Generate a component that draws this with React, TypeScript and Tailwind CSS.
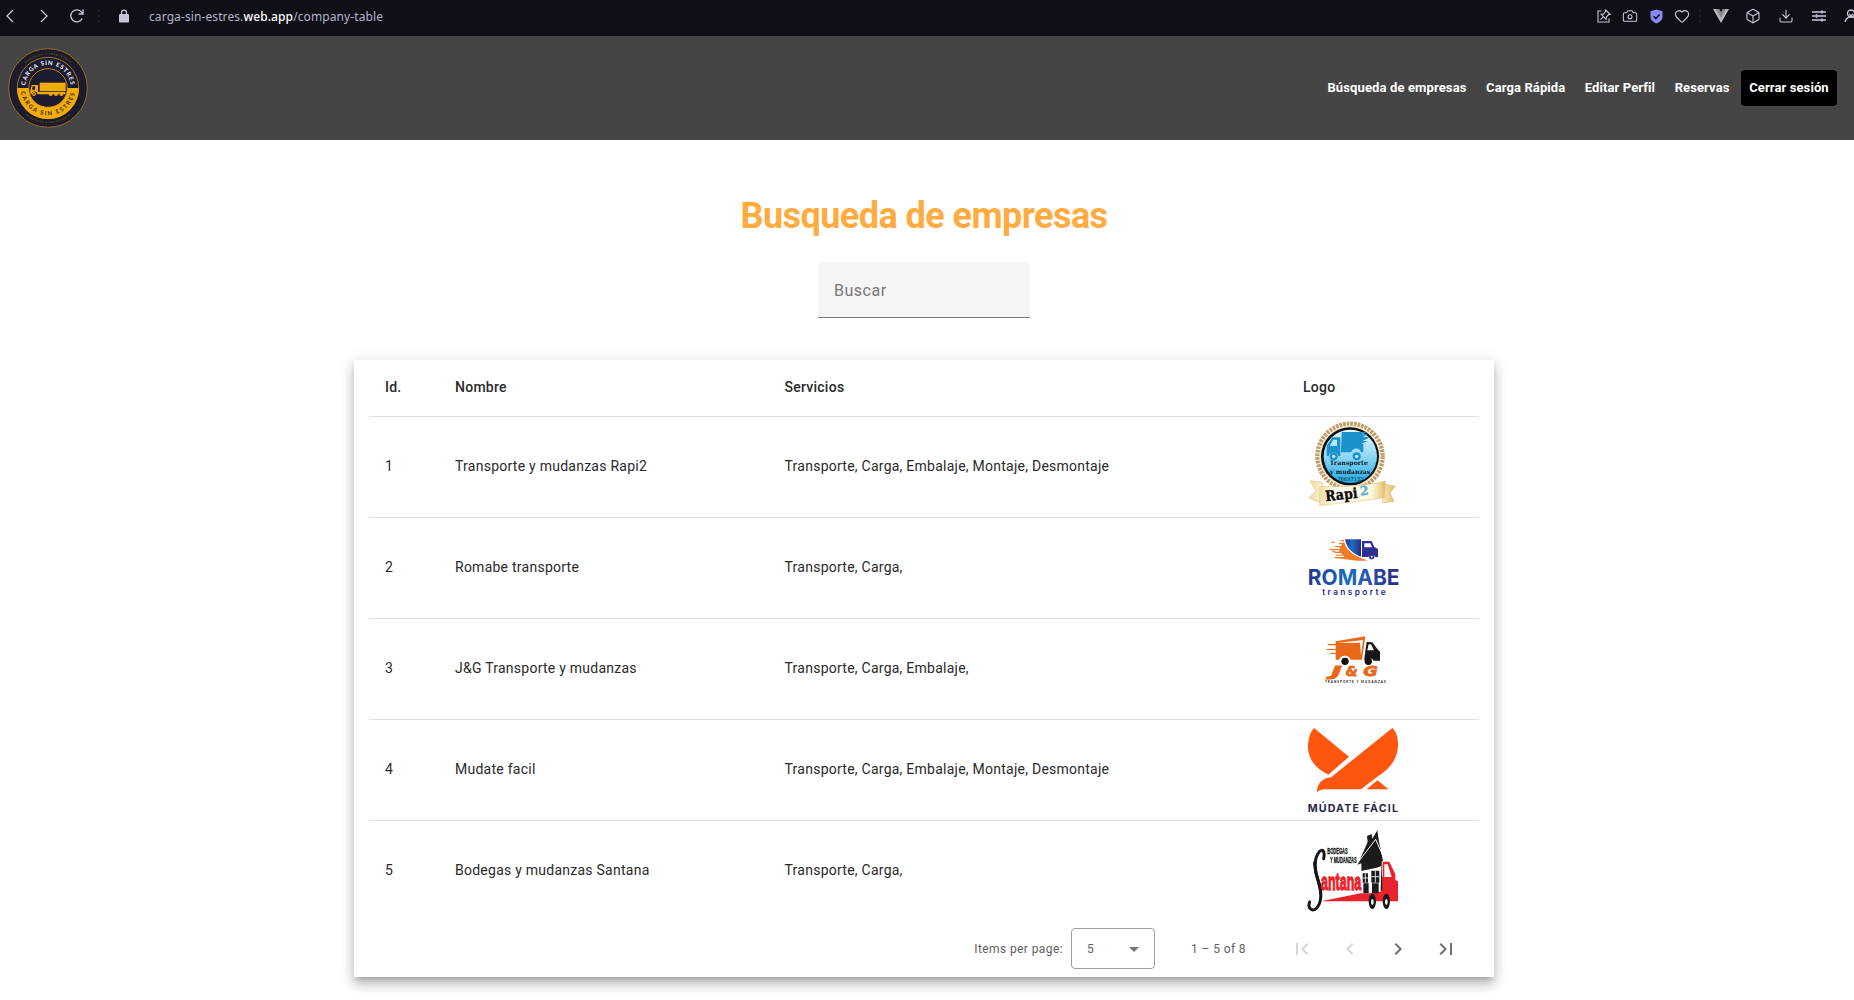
import React from "react";
import { Box, Camera, Download, Heart } from "lucide-react";

const line = { fill: "none", stroke: "#c9c8dc", strokeWidth: 1.3 } as const;

function Dots() {
  return (
    <svg width="4" height="14" viewBox="0 0 4 14" fill="#20202d">
      <rect x="1" y="1" width="2" height="2" />
      <rect x="1" y="6" width="2" height="2" />
      <rect x="1" y="11" width="2" height="2" />
    </svg>
  );
}

function BrowserBar() {
  const cell = "flex shrink-0 items-center justify-center";
  return (
    <div className="flex h-9 items-center overflow-hidden bg-[#0f0f18] pb-1 text-[#c9c8dc]">
      <svg className="ml-[5px]" width="10" height="14" viewBox="0 0 10 14" {...line}>
        <path d="M8 1 2 7l6 6" />
      </svg>
      <svg className="ml-6" width="10" height="14" viewBox="0 0 10 14" {...line}>
        <path d="m2 1 6 6-6 6" />
      </svg>
      <svg className="ml-5" width="16" height="16" viewBox="0 0 16 16" {...line}>
        <path d="M13.2 10.5A6 6 0 1 1 12.6 4.2L14 6M14 1.5V6H9.5" />
      </svg>
      <span className="ml-3 flex"><Dots /></span>
      <svg className="ml-[18px]" width="10" height="14" viewBox="0 0 10 14">
        <path d="M2.5 6V3.6a2.5 2.5 0 0 1 5 0V6" fill="none" stroke="#c4c3d8" strokeWidth="1.3" />
        <rect x="0" y="5" width="10" height="8.5" rx="1.2" fill="#c4c3d8" />
      </svg>
      <div className="ml-5 whitespace-nowrap pt-px font-['Noto_Sans','Open_Sans',sans-serif] text-[12px] leading-4 tracking-[0.1px] text-[#b5b4c8]">
        carga-sin-estres.<span className="font-medium text-white">web.app</span>/company-table
      </div>
      <div className="-mr-[13px] ml-auto flex h-full">
        <span className={`w-[26px] ${cell}`}>
          <svg width="14" height="14" viewBox="0 0 14 14" {...line} strokeWidth={1.1}>
            <path d="M4.5 2H1v11h11V9.500" />
            <path d="m8.700 1 4.300 4.300-1.300.3-2.400 2.500-.2 2.200-5-5 2.200-.2 2.200-2.600zM6.500 7.700l-3 3" />
          </svg>
        </span>
        <span className={`w-[26px] ${cell}`}><Camera size={16} strokeWidth={1.6} /></span>
        <span className={`w-[26px] ${cell}`}>
          <svg width="13" height="15" viewBox="0 0 13 15">
            <path d="M6.500.5 12.500 2.300V8c0 3-2.600 5-6 6.500C3.100 13 .5 11 .5 8V2.300z" fill="#8d86f8" />
            <path d="m3.600 7.300 2.200 2.200 3.800-4" fill="none" stroke="#11111c" strokeWidth="1.600" />
          </svg>
        </span>
        <span className={`w-[26px] ${cell}`}><Heart size={16} strokeWidth={1.7} /></span>
        <span className={`w-2.5 ${cell}`}><Dots /></span>
        <span className={`w-8 ${cell}`}>
          <svg width="16" height="14" viewBox="0 0 16 14">
            <path d="M0 0h6l2 3.500L10 0h6L8 14z" fill="#b9b9bd" />
            <path d="M3 0h3l2 3.500L10 0h3L8 8.700z" fill="#85858b" />
          </svg>
        </span>
        <span className={`w-[31px] ${cell}`}><Box size={16} strokeWidth={1.6} /></span>
        <span className={`w-[35px] ${cell}`}><Download size={16} strokeWidth={1.6} /></span>
        <span className={`w-8 ${cell}`}>
          <svg width="14" height="12" viewBox="0 0 14 12" {...line}>
            <path d="M0 2h14M0 6h14M0 10h14M10 .3v3.400M4.500 4.300v3.400M10 8.300v3.400" />
          </svg>
        </span>
        <span className={`w-8 ${cell}`}>
          <svg width="16" height="14" viewBox="0 0 16 14" {...line}>
            <circle cx="8" cy="4.500" r="3.500" />
            <path d="M2 13c.5-3 2-4 4-5h4c2 1 3.500 2 4 5M6 5l2 2 2-2" />
          </svg>
        </span>
      </div>
    </div>
  );
}

function BrandLogo() {
  return (
    <svg className="ml-1.5" width="84" height="84" viewBox="18 18 252 252" fontFamily="Lato, sans-serif">
      <defs>
        <path id="brand-top" d="M77 154a68 68 0 1 1 134 0" />
        <path id="brand-bottom" d="M62 144a82 82 0 0 0 164 0" />
        <path id="brand-outer-top" d="M44 144a100 100 0 0 1 200 0" />
        <path id="brand-outer-bottom" d="M38 144a106 106 0 0 0 212 0" />
      </defs>
      <circle cx="144" cy="144" r="118" fill="#1d1a2b" stroke="#8d701b" strokeWidth="3" />
      <circle cx="144" cy="144" r="92" fill="#1d1b30" stroke="#b88b17" strokeWidth="2.500" />
      <path d="M51 144a93 93 0 0 0 186 0z" fill="#f2ac05" />
      <circle cx="144" cy="144" r="58" fill="#1d1b30" stroke="#d79b0c" strokeWidth="2.500" />
      <g textAnchor="middle" fontWeight="900">
        <text fontSize="18" fill="#e4e5f2" letterSpacing="2.500">
          <textPath href="#brand-top" startOffset="50%">CARGA SIN ESTRES</textPath>
        </text>
        <text fontSize="18" fill="#4a3718" letterSpacing="4.500">
          <textPath href="#brand-bottom" startOffset="50%">CARGA SIN ESTRES</textPath>
        </text>
        <text fontSize="8" fill="#65541f" letterSpacing="2">
          <textPath href="#brand-outer-top" startOffset="50%">MUDANZAS • TRANSPORTE</textPath>
        </text>
        <text fontSize="8" fill="#65541f" letterSpacing="2">
          <textPath href="#brand-outer-bottom" startOffset="50%">MUDANZAS • TRANSPORTE</textPath>
        </text>
      </g>
      <g fill="#f2ac05">
        <path d="M119 128h78v25h-78z" />
        <path fillRule="evenodd" d="M95 135h19v20h82v8h-6a8 8 0 0 0-14 0h-3a8 8 0 0 0-11 0h-4a8 8 0 0 0-12 0h-34a8 8 0 0 0-17 0h-4v-12zm3 4-2 10h9v-10z" />
        <circle cx="102" cy="162" r="6" />
        <circle cx="152" cy="162" r="6" />
        <circle cx="168" cy="162" r="6" />
        <circle cx="184" cy="162" r="6" />
      </g>
      <circle cx="102" cy="162" r="2.500" fill="#1d1b30" />
    </svg>
  );
}

function Rapi2Logo() {
  return (
    <svg width="100" height="100" viewBox="69 21 300 300">
      <defs>
        <linearGradient id="rapi-sky" x1="0" y1="0" x2="0" y2="1">
          <stop offset="0" stopColor="#e6f7fe" />
          <stop offset=".5" stopColor="#8fd8f6" />
          <stop offset="1" stopColor="#20a9e2" />
        </linearGradient>
        <linearGradient id="rapi-gold" x1="0" y1="0" x2="1" y2="0">
          <stop offset="0" stopColor="#f3dfa4" />
          <stop offset=".25" stopColor="#fffdf2" />
          <stop offset=".8" stopColor="#fdf6da" />
          <stop offset="1" stopColor="#e0bd6a" />
        </linearGradient>
      </defs>
      <circle cx="210" cy="139" r="98" fill="none" stroke="#c09c66" strokeWidth="13" strokeDasharray="8 3" />
      <circle cx="210" cy="139" r="91" fill="#efe0b8" />
      <circle cx="210" cy="139" r="87" fill="#0c1218" />
      <circle cx="211" cy="139" r="80" fill="url(#rapi-sky)" />
      <g fill="#1c92cd">
        <path d="M185 66h77l-18 7h20l-16 8h22l-22 12h14l-18 9h6v25h-7a15 15 0 0 0-29 0h-31z" />
        <path fillRule="evenodd" d="M157 82h24v56h-6a15 15 0 0 0-29 0h-6v-31zm3 7-11 19h22V89z" />
        <circle cx="161" cy="139" r="12" />
        <circle cx="230" cy="139" r="12" />
      </g>
      <circle cx="161" cy="139" r="5" fill="#d2effa" />
      <circle cx="230" cy="139" r="5" fill="#d2effa" />
      <g fontFamily="DejaVu Serif, serif" fontWeight="700" fill="#0d1a28">
        <text x="149" y="165" fontSize="19" textLength="115" lengthAdjust="spacingAndGlyphs">Transporte</text>
        <text x="150" y="191" fontSize="19" textLength="121" lengthAdjust="spacingAndGlyphs">y mudanzas</text>
        <text x="173" y="213" fontSize="16" textLength="77" lengthAdjust="spacingAndGlyphs" fontWeight="400">76697133</text>
      </g>
      <path d="m91 212 36 5-3 62-36-15 19-22zM315 222l31 7-16 20 12 25-35 5z" fill="url(#rapi-gold)" stroke="#d3b064" strokeWidth="1.500" />
      <path d="M119 229c65 3 130 0 197-16l-3 50c-60 10-125 14-194 24z" fill="url(#rapi-gold)" stroke="#dfc078" strokeWidth="1.500" />
      <g transform="rotate(-6 190 262)" fontFamily="DejaVu Serif, serif" fontWeight="700">
        <text x="136" y="268" fontSize="43" textLength="98" lengthAdjust="spacingAndGlyphs" stroke="#08090c" fill="#08090c">Rapi</text>
        <text x="241" y="262" fontSize="38" stroke="#55b2dc" fill="#55b2dc">2</text>
      </g>
    </svg>
  );
}

function RomabeLogo() {
  return (
    <svg width="100" height="100" viewBox="69 -6 300 300">
      <defs>
        <linearGradient id="romabe-blue" x1="0" y1="0" x2="1" y2="0">
          <stop offset="0" stopColor="#24338f" />
          <stop offset=".45" stopColor="#176fc0" />
          <stop offset=".7" stopColor="#2b4cab" />
          <stop offset="1" stopColor="#2a2a82" />
        </linearGradient>
      </defs>
      <path d="M190 53c2 33 27 55 73 68-31 5-59-4-99-6v-4h28v-4h-25v-3h18v-5h-20v-4h13v-4h-29v-4h30v-5h-14v-4h20v-5h-9v-4h14v-6h-8v-3h10z" fill="#f37b26" />
      <path d="M155 65h8v4h-8zM157 93h9v4h-9z" fill="#f37b26" />
      <path d="M195 58h48v52c-25-7-43-26-48-52z" fill="url(#romabe-blue)" />
      <path fillRule="evenodd" d="M246 63h29l8 18 11 6v24h-8a11 11 0 0 0-21 0h-19zm7 7v12h23l-5-12z" fill="#2c2f93" />
      <circle cx="275" cy="110" r="8" fill="#2c2f93" />
      <circle cx="275" cy="110" r="3" fill="#fff" />
      <text x="83" y="194" fontFamily="Inter, sans-serif" fontSize="65" fontWeight="700" textLength="276" lengthAdjust="spacingAndGlyphs" fill="url(#romabe-blue)">ROMABE</text>
      <text x="127" y="226" fontFamily="Inter, sans-serif" fontSize="25" fontWeight="600" textLength="190" fill="#292f83">transporte</text>
    </svg>
  );
}

function JGLogo() {
  return (
    <svg width="100" height="100" viewBox="69 -3 300 300">
      <path d="m167 64 89-15-10 70h-34a19 19 0 0 0-35 0h-10v-17h-15v-3h15V90h-28v-3h28V76h-24v-4h24z" fill="#ea6819" />
      <path d="m172 69 77-9-6 46-3-38z" fill="#fff" />
      <path fillRule="evenodd" d="m260 66 17 1 15 20 8 8v27h-19a17 17 0 0 0-29 0l4-28zm6 7-4 18h20l-9-18z" fill="#171717" />
      <circle cx="195" cy="124" r="11" fill="#111" />
      <circle cx="265" cy="124" r="11" fill="#111" />
      <g fontFamily="DejaVu Sans, sans-serif" fontSize="43" fontWeight="700" fontStyle="italic" stroke="#ea6819" strokeWidth="2.500" fill="#ea6819">
        <text x="154" y="169" textLength="32" lengthAdjust="spacingAndGlyphs">J</text>
        <text x="197" y="169" textLength="36" lengthAdjust="spacingAndGlyphs">&amp;</text>
        <text x="250" y="169" textLength="44" lengthAdjust="spacingAndGlyphs">G</text>
      </g>
      <text x="135" y="188" fontFamily="Lato, sans-serif" fontSize="9" fontWeight="900" textLength="182" fill="#222">TRANSPORTE Y MUDANZAS</text>
    </svg>
  );
}

function MudateLogo() {
  return (
    <svg width="100" height="100" viewBox="69 15 300 300">
      <g fill="#ff560f">
        <path d="m102 39 105 86-62 54C110 162 84 136 84 94c0-24 8-45 18-55z" />
        <path d="M337 39c13 12 17 31 17 48 0 46-26 75-59 96l-52 40H136c-12 0-19 3-25 9 0-26 15-42 42-45z" />
        <path d="m292 196 34 27h-66z" />
      </g>
      <text x="83" y="290" fontFamily="Inter, sans-serif" fontSize="32" fontWeight="700" textLength="271" fill="#2a2848">MÚDATE FÁCIL</text>
    </svg>
  );
}

function SantanaLogo() {
  return (
    <svg width="100" height="100" viewBox="69 3 300 300">
      <path d="m130 242 112-22h30v-55l36 5v-45h20l18 38v17l8 4v60H130z" fill="#e9232b" />
      <path d="M313 133h10l12 38h-22z" fill="#fff" />
      <path d="m233 134 30-68-2-18 14-6 2 14 15-25 5 34 12 57-4 3 2 85-31 8h-31l-1-88z" fill="#1b1a1c" />
      <path d="m231 131 56-73 22 50" fill="none" stroke="#fff" strokeWidth="3" />
      <path d="m243 153 47-10 14-5-2 77-18 4h-40z" fill="#fff" />
      <path d="M248 160h16v28h-16zM274 152h24v36h-24zM250 190h16v30h-16zM276 190h20v30h-20z" fill="#1b1a1c" />
      <path d="M256 160v28M248 174h16M286 152v36M274 170h24" stroke="#fff" strokeWidth="2.500" />
      <ellipse cx="277" cy="244" rx="11" ry="23" fill="#171719" />
      <ellipse cx="319" cy="244" rx="11" ry="23" fill="#171719" />
      <ellipse cx="277" cy="246" rx="4" ry="9" fill="#fff" />
      <ellipse cx="319" cy="246" rx="4" ry="9" fill="#fff" />
      <path d="M131 116c5-24-4-30-13-21-17 19-15 57-4 85 12 33 12 69-5 85-14 12-27-2-20-19" fill="none" stroke="#171719" strokeWidth="9" strokeLinecap="round" />
      <path d="M104 125c-2 31 17 64 18 97" fill="none" stroke="#171719" strokeWidth="9" />
      <g transform="translate(123 210) scale(1 1.900)">
        <text fontFamily="Liberation Sans, sans-serif" fontSize="38" fontWeight="700" textLength="121" lengthAdjust="spacingAndGlyphs" stroke="#e9232b" strokeWidth="2" fill="#e9232b">antana</text>
      </g>
      <g fontFamily="Liberation Sans, sans-serif" fontWeight="700" fill="#171719" stroke="#171719">
        <text x="142" y="101" fontSize="27" textLength="61" lengthAdjust="spacingAndGlyphs">BODEGAS</text>
        <text x="150" y="128" fontSize="27" textLength="80" lengthAdjust="spacingAndGlyphs">Y MUDANZAS</text>
      </g>
    </svg>
  );
}

const companies = [
  { id: 1, name: "Transporte y mudanzas Rapi2", services: "Transporte, Carga, Embalaje, Montaje, Desmontaje", Logo: Rapi2Logo },
  { id: 2, name: "Romabe transporte", services: "Transporte, Carga,", Logo: RomabeLogo },
  { id: 3, name: "J&G Transporte y mudanzas", services: "Transporte, Carga, Embalaje,", Logo: JGLogo },
  { id: 4, name: "Mudate facil", services: "Transporte, Carga, Embalaje, Montaje, Desmontaje", Logo: MudateLogo },
  { id: 5, name: "Bodegas y mudanzas Santana", services: "Transporte, Carga,", Logo: SantanaLogo },
];

const pageButtons = [
  { label: "First page", d: "M18.410 16.590 13.820 12l4.590-4.590L17 6l-6 6 6 6zM6 6h2v12H6z", enabled: false },
  { label: "Previous page", d: "M15.410 7.410 14 6l-6 6 6 6 1.410-1.410L10.830 12z", enabled: false },
  { label: "Next page", d: "M10 6 8.590 7.410 13.170 12l-4.580 4.590L10 18l6-6z", enabled: true },
  { label: "Last page", d: "M5.590 7.410 10.180 12l-4.590 4.590L7 18l6-6-6-6zM16 6h2v12h-2z", enabled: true },
];

export default function App() {
  const row = "grid grid-cols-[70px_329.5px_518.5px_192px] border-[#e0e0e0] [&>*]:pl-4";
  return (
    <div className="h-[1000px] overflow-hidden bg-white font-[Roboto,sans-serif] text-[#2a2a2a]">
      <BrowserBar />
      <header className="flex h-[104px] items-center justify-between bg-[#454545]">
        <BrandLogo />
        <nav className="mr-[17px] flex items-center text-[13px] font-bold leading-5 tracking-[0.1px] text-white">
          <a className="mr-[19.5px] tracking-[0.13px]">Búsqueda de empresas</a>
          <a className="mr-[19.5px]">Carga Rápida</a>
          <a className="mr-[19.5px]">Editar Perfil</a>
          <a className="mr-[11.5px]">Reservas</a>
          <button className="h-9 w-24 rounded bg-black">Cerrar sesión</button>
        </nav>
      </header>
      <main className="mr-1.5 flex flex-col items-center">
        <h1 className="mt-[54px] text-[36px] font-bold leading-[44px] tracking-[-0.55px] text-[#ffab40]">Busqueda de empresas</h1>
        <div className="mt-6 flex h-14 w-[212px] items-center rounded-t border-b border-[#7d7d7d] bg-[#f5f5f5] px-4 pt-0.5 text-base tracking-[0.5px] text-[#777]">
          Buscar
        </div>
        <section className="mt-[42px] w-[1140px] bg-white px-[15px] text-sm tracking-[0.25px] shadow-[0_5px_5px_-3px_rgba(0,0,0,0.2),0_8px_10px_1px_rgba(0,0,0,0.14),0_3px_14px_2px_rgba(0,0,0,0.12)]">
          <div className={`${row} h-[57px] border-b font-medium leading-[55px]`}>
            <span>Id.</span>
            <span>Nombre</span>
            <span>Servicios</span>
            <span>Logo</span>
          </div>
          {companies.map(({ id, name, services, Logo }) => (
            <div key={id} className={`${row} h-[101px] border-b leading-[98px] last-of-type:h-[100px]`}>
              <span>{id}</span>
              <span>{name}</span>
              <span>{services}</span>
              <span><Logo /></span>
            </div>
          ))}
          <footer className="relative -mt-px flex h-[57px] items-center justify-end bg-white pr-[9px] text-xs tracking-[0.4px] text-[#616161]">
            <span className="pt-px">Items per page:</span>
            <div className="ml-2 flex h-[41px] w-[84px] items-center justify-between rounded border border-[#9e9e9e] px-[15px] pt-px">
              <span>5</span>
              <span className="border-x-[5px] border-t-[5px] border-x-transparent border-t-[#757575]" />
            </div>
            <span className="ml-9 mr-8 pt-px">1 – 5 of 8</span>
            {pageButtons.map(({ label, d, enabled }) => (
              <button key={label} aria-label={label} className="flex size-12 items-center justify-center">
                <svg width="24" height="24" viewBox="0 0 24 24" className={enabled ? "fill-[#707070]" : "fill-[#d6d6d6]"}>
                  <path d={d} />
                </svg>
              </button>
            ))}
          </footer>
        </section>
      </main>
    </div>
  );
}
